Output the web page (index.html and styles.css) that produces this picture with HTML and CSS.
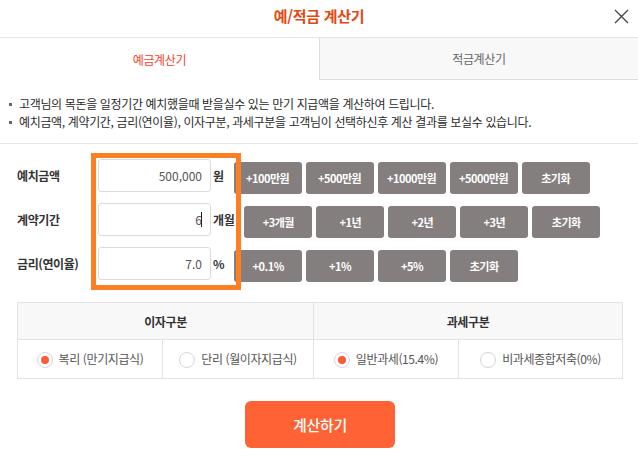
FILE: index.html
```html
<!DOCTYPE html>
<html lang="ko">
<head>
<meta charset="utf-8">
<title>예/적금 계산기</title>
<link rel="stylesheet" href="styles.css">
</head>
<body>
<div class="popup">
  <header class="head">
    <h1 class="title">예/적금 계산기</h1>
    <button class="close" aria-label="닫기">
      <svg width="15" height="15" viewBox="0 0 15 15"><path d="M1 1L14 14M14 1L1 14" stroke="#444" stroke-width="1.3" fill="none"/></svg>
    </button>
  </header>
  <nav class="tabs">
    <a class="tab active">예금계산기</a>
    <a class="tab">적금계산기</a>
  </nav>
  <ul class="desc">
    <li>고객님의 목돈을 일정기간 예치했을때 받을실수 있는 만기 지급액을 계산하여 드립니다.</li>
    <li>예치금액, 계약기간, 금리(연이율), 이자구분, 과세구분을 고객님이 선택하신후 계산 결과를 보실수 있습니다.</li>
  </ul>
  <section class="form">
    <div class="row">
      <label class="label">예치금액</label>
      <div class="field">500,000</div>
      <span class="unit">원</span>
      <div class="btns">
        <button class="btn">+100만원</button>
        <button class="btn">+500만원</button>
        <button class="btn">+1000만원</button>
        <button class="btn">+5000만원</button>
        <button class="btn">초기화</button>
      </div>
    </div>
    <div class="row">
      <label class="label">계약기간</label>
      <div class="field">6<i class="caret"></i></div>
      <span class="unit">개월</span>
      <div class="btns">
        <button class="btn">+3개월</button>
        <button class="btn">+1년</button>
        <button class="btn">+2년</button>
        <button class="btn">+3년</button>
        <button class="btn">초기화</button>
      </div>
    </div>
    <div class="row">
      <label class="label">금리(연이율)</label>
      <div class="field">7.0</div>
      <span class="unit">%</span>
      <div class="btns">
        <button class="btn">+0.1%</button>
        <button class="btn">+1%</button>
        <button class="btn">+5%</button>
        <button class="btn">초기화</button>
      </div>
    </div>
    <div class="highlight"></div>
  </section>
  <table class="opts">
    <colgroup>
      <col class="c1"><col class="c2"><col class="c3"><col class="c4">
    </colgroup>
    <thead>
      <tr><th colspan="2">이자구분</th><th colspan="2">과세구분</th></tr>
    </thead>
    <tbody>
      <tr>
        <td><span class="radio on"></span>복리 (만기지급식)</td>
        <td><span class="radio"></span>단리 (월이자지급식)</td>
        <td><span class="radio on"></span>일반과세(15.4%)</td>
        <td><span class="radio"></span>비과세종합저축(0%)</td>
      </tr>
    </tbody>
  </table>
  <div class="actions">
    <button class="calc">계산하기</button>
  </div>
</div>
</body>
</html>
```

FILE: styles.css
```css
* { box-sizing: border-box; }
body {
  margin: 0;
  font-family: "Noto Sans CJK KR", "Noto Sans", sans-serif;
  color: #333;
  background: #fff;
}
.popup { width: 638px; }

.head {
  position: relative;
  height: 38px;
  border-bottom: 1px solid #e6e6e6;
  display: flex;
  justify-content: center;
}
.title {
  margin: 0;
  padding-top: 6px;
  font-size: 15px;
  line-height: 20px;
  font-weight: 700;
  color: #e4470f;
  letter-spacing: -0.3px;
}
.close {
  position: absolute;
  right: 9px;
  top: 9px;
  width: 15px;
  height: 15px;
  padding: 0;
  border: 0;
  background: none;
}
.close svg { display: block; }

.tabs { display: flex; height: 42px; }
.tab {
  display: flex;
  align-items: center;
  justify-content: center;
  font-size: 12px;
  color: #666;
  letter-spacing: -0.3px;
}
.tab.active { width: 319px; color: #f8402c; }
.tab:not(.active) {
  flex: 1;
  background: #f8f8f8;
  border-left: 1px solid #dcdcdc;
  border-bottom: 1px solid #dcdcdc;
}

.desc {
  list-style: none;
  margin: 0;
  padding: 15px 0 12px;
  border-bottom: 1px solid #e6e6e6;
}
.desc li {
  display: flex;
  align-items: center;
  font-size: 12px;
  line-height: 18px;
  color: #2b2b2b;
  letter-spacing: -0.35px;
}
.desc li::before {
  content: "";
  width: 3px;
  height: 3px;
  background: #666;
  margin: 0 7px 0 9px;
  flex: none;
}

.form {
  position: relative;
  padding: 15px 0 0 17px;
  display: flex;
  flex-direction: column;
  gap: 11px;
}
.row { display: flex; align-items: center; height: 33px; }
.label {
  width: 81px;
  font-size: 12px;
  font-weight: 700;
  color: #333;
  letter-spacing: -0.4px;
}
.field {
  width: 113px;
  height: 33px;
  border: 1px solid #dcdcdc;
  border-radius: 3px;
  padding-right: 8px;
  display: flex;
  align-items: center;
  justify-content: flex-end;
  font-size: 12px;
  color: #555;
  background: #fff;
}
.caret {
  display: inline-block;
  width: 1px;
  height: 15px;
  background: #222;
  margin-left: -1px;
}
.unit {
  margin-left: 2px;
  font-size: 12px;
  font-weight: 700;
  color: #333;
  letter-spacing: -0.4px;
}
.btns {
  display: flex;
  gap: 4px;
  margin-left: 10px;
  margin-top: 5px;
}
.btn {
  width: 68px;
  height: 32px;
  border: 0;
  border-radius: 3px;
  background: #857e7f;
  color: #fff;
  font-family: inherit;
  font-size: 11px;
  font-weight: 700;
  letter-spacing: -0.5px;
  padding: 0;
}
.highlight {
  position: absolute;
  left: 91px;
  top: 9px;
  width: 150px;
  height: 137px;
  border: 5px solid #fd7f23;
  pointer-events: none;
}

.opts {
  margin: 22px 0 0 17px;
  width: 605px;
  border-collapse: collapse;
  table-layout: fixed;
}
.c1 { width: 145px; }
.c2 { width: 151px; }
.c3 { width: 145px; }
.c4 { width: 164px; }
.opts th, .opts td {
  border: 1px solid #e3e3e3;
  text-align: center;
  padding: 0;
}
.opts th {
  height: 37px;
  background: #f8f8f8;
  font-size: 12px;
  font-weight: 700;
  color: #333;
  letter-spacing: -0.4px;
}
.opts td {
  height: 39px;
  font-size: 12px;
  color: #555;
  letter-spacing: -0.4px;
  white-space: nowrap;
}
.radio {
  display: inline-block;
  vertical-align: middle;
  width: 16px;
  height: 16px;
  border: 1px solid #d6d6d6;
  border-radius: 50%;
  background: #fff;
  margin: -2px 6px 0 0;
  position: relative;
}
.radio.on::after {
  content: "";
  position: absolute;
  left: 3px;
  top: 3px;
  width: 8px;
  height: 8px;
  border-radius: 50%;
  background: #ff5a36;
}

.actions {
  display: flex;
  justify-content: center;
  padding-top: 22px;
  padding-left: 2px;
}
.calc {
  width: 150px;
  height: 47px;
  border: 0;
  border-radius: 6px;
  background: #ff6234;
  color: #fff;
  font-family: inherit;
  font-size: 15px;
  font-weight: 500;
  letter-spacing: -0.3px;
}
```
